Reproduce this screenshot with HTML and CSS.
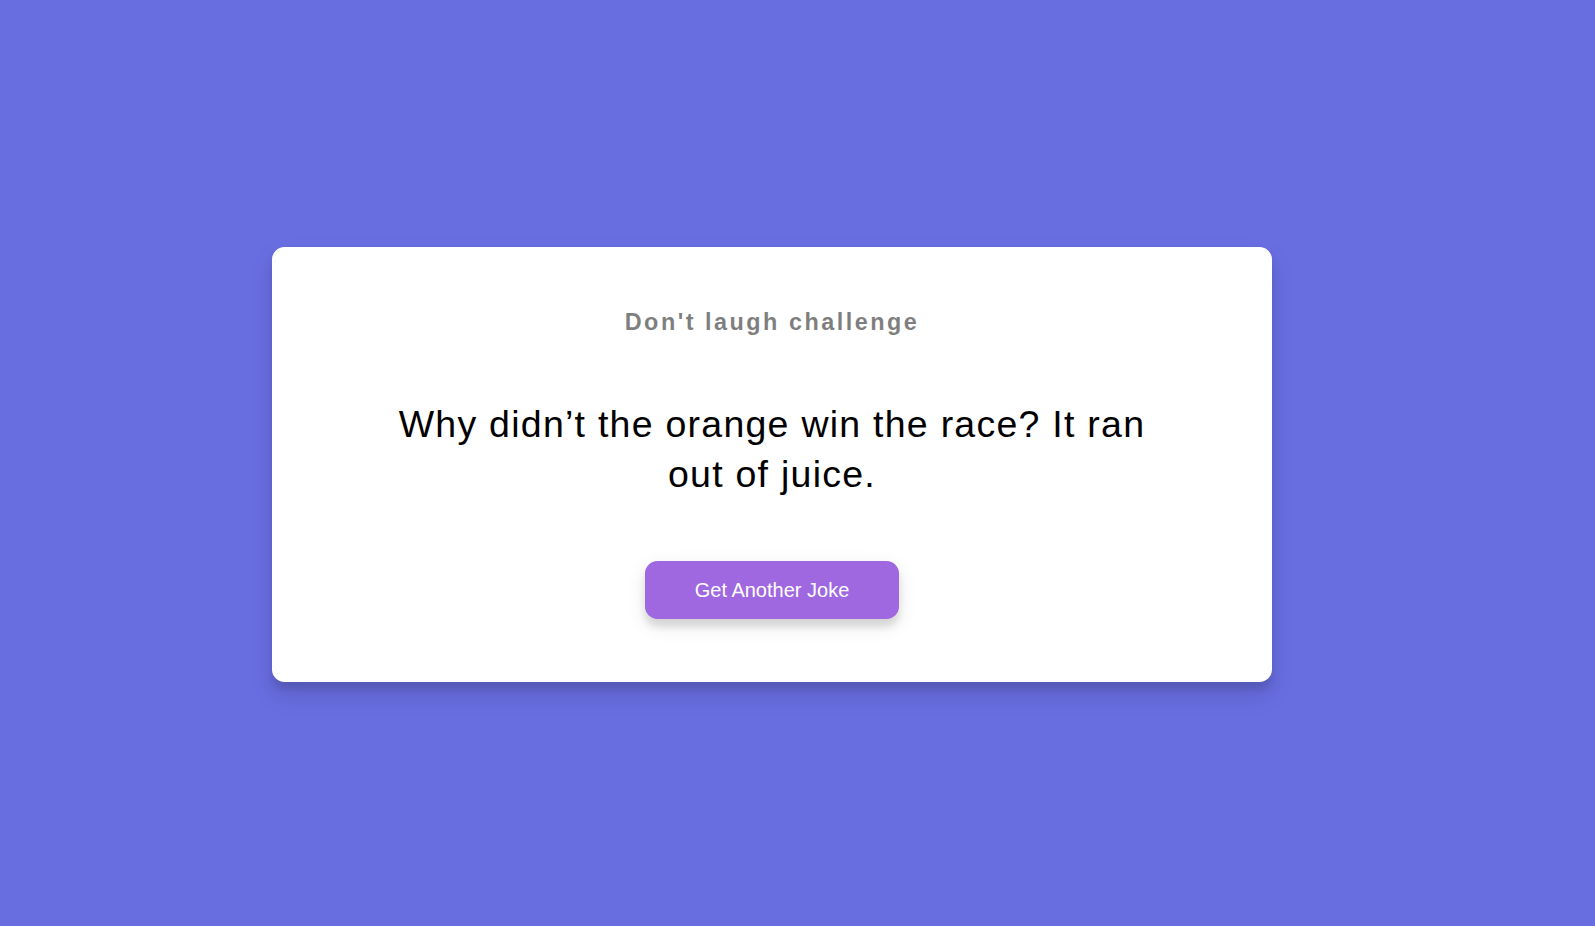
FILE: index.html
```html
<!DOCTYPE html>
<html lang="en">
<head>
<meta charset="UTF-8">
<title>Dad Jokes</title>
<link rel="stylesheet" href="styles.css">
</head>
<body>
  <div class="container">
    <h3 class="title">Don't laugh challenge</h3>
    <div class="joke">Why didn’t the orange win the race? It ran out of juice.</div>
    <button class="btn">Get Another Joke</button>
  </div>
</body>
</html>
```
FILE: styles.css
```css
* {
  box-sizing: border-box;
}

body {
  background-color: #686de0;
  font-family: "Liberation Sans", Arial, sans-serif;
  display: flex;
  flex-direction: column;
  align-items: center;
  justify-content: center;
  height: 100vh;
  overflow: hidden;
  margin: 0;
  padding: 27px 51px 25px 0;
}

.container {
  background-color: #fff;
  border-radius: 12.5px;
  box-shadow: 0 12.5px 25px rgba(0, 0, 0, 0.1), 0 7.5px 7.5px rgba(0, 0, 0, 0.1);
  padding: 62.5px 25px;
  text-align: center;
  max-width: 100%;
  width: 1000px;
}

.title {
  margin: 0;
  font-size: 23.4px;
  font-weight: bold;
  opacity: 0.5;
  letter-spacing: 2.5px;
}

.joke {
  font-size: 37.5px;
  letter-spacing: 1.25px;
  line-height: 50px;
  margin: 62.5px auto;
  max-width: 750px;
}

.btn {
  background-color: #9f68e0;
  color: #fff;
  border: 0;
  border-radius: 12.5px;
  box-shadow: 0 6.25px 18.75px rgba(0, 0, 0, 0.1), 0 7.5px 7.5px rgba(0, 0, 0, 0.1);
  padding: 17.5px 50px;
  font-family: "Liberation Sans", Arial, sans-serif;
  font-size: 20px;
  cursor: pointer;
}
```
